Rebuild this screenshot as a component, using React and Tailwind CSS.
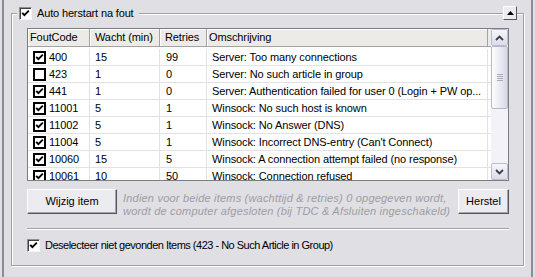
import React from "react";

const rows = [
  [true, "400", "15", "99", "Server: Too many connections"],
  [false, "423", "1", "0", "Server: No such article in group"],
  [true, "441", "1", "0", "Server: Authentication failed for user 0 (Login + PW op..."],
  [true, "11001", "5", "1", "Winsock: No such host is known"],
  [true, "11002", "5", "1", "Winsock: No Answer (DNS)"],
  [true, "11004", "5", "1", "Winsock: Incorrect DNS-entry (Can't Connect)"],
  [true, "10060", "15", "5", "Winsock: A connection attempt failed (no response)"],
  [true, "10061", "10", "50", "Winsock: Connection refused"],
];

const RowCheck = ({ checked }) => (
  <svg width="13" height="13" viewBox="0 0 13 13" className="shrink-0">
    <rect x="1" y="1" width="11" height="11" fill="#fff" stroke="#000" strokeWidth="2" />
    {checked && (
      <path d="M3.2 5.8 L5.4 8.2 L9.8 3.6" stroke="#000" strokeWidth="1.9" fill="none" />
    )}
  </svg>
);

const SunkenCheck = () => (
  <div className="w-[13px] h-[13px] shrink-0 border border-t-[#8e8e93] border-l-[#8e8e93] border-r-[#f4f4f6] border-b-[#f4f4f6] bg-white shadow-[inset_1px_1px_0_#404040] flex items-center justify-center">
    <svg width="9" height="9" viewBox="0 0 9 9">
      <path d="M1.2 3.8 L3.4 6.2 L7.8 1.6" stroke="#000" strokeWidth="1.9" fill="none" />
    </svg>
  </div>
);

const ScrollArrow = ({ up }) => (
  <div className="h-[17px] w-[17px] shrink-0 rounded-[2px] border border-[#bcbccf] bg-gradient-to-b from-[#f6f6fa] to-[#dcdce8] flex items-center justify-center">
    <svg width="9" height="6" viewBox="0 0 9 6">
      <path
        d={up ? "M1 5 L4.5 1.5 L8 5" : "M1 1 L4.5 4.5 L8 1"}
        stroke="#3c3c48"
        strokeWidth="1.8"
        fill="none"
      />
    </svg>
  </div>
);

const Button = ({ className, children }) => (
  <button className={`h-[25px] shrink-0 bg-[#ecebef] border border-t-white border-l-white border-r-[#55555c] border-b-[#55555c] shadow-[inset_-1px_-1px_0_#a5a5ab] text-black text-[11px] ${className}`}>
    {children}
  </button>
);

const App = () => {
  return (
    <div className="w-[535px] h-[277px] overflow-hidden bg-[#e0dfe3] text-[11px] text-black font-['Liberation_Sans',Arial,sans-serif]">
      <div className="ml-[2px] w-[531px] h-full border-l-2 border-r-2 border-[#8b8b99] pt-[13px] pl-[7px]">
        {/* Group box */}
        <div className="relative w-[513px] h-[253px] border border-[#9f9fa5] shadow-[inset_1px_1px_0_#fff,1px_1px_0_#fff] pt-[14px] pl-[15px]">
          <div className="absolute left-[5px] top-[-8px] flex items-center gap-[5px] bg-[#e0dfe3] pl-[2px] pr-[5px] h-[15px]">
            <SunkenCheck />
            <span className="leading-[13px] tracking-[-0.15px]">Auto herstart na fout</span>
          </div>
          <button className="absolute left-[491px] top-[-8px] w-[14px] h-[14px] bg-[#ecebef] border border-t-white border-l-white border-r-[#55555c] border-b-[#55555c] flex items-center justify-center">
            <svg width="7" height="4" viewBox="0 0 7 4">
              <path d="M0 4 L3.5 0 L7 4 Z" fill="#000" />
            </svg>
          </button>

          {/* List view */}
          <div className="w-[482px] h-[153px] border border-[#7c7c84] bg-white flex">
            <div className="w-[463px] overflow-hidden flex flex-col tracking-[-0.1px]">
              <div className="h-[18px] shrink-0 flex bg-[#ecebe8] border-b border-[#a3a2a6]">
                <div className="w-[62px] pl-[2px] flex items-center border-r border-[#a3a2a6] shadow-[inset_1px_1px_0_#fff]">FoutCode</div>
                <div className="w-[70px] pl-[5px] flex items-center border-r border-[#a3a2a6] shadow-[inset_1px_1px_0_#fff]">Wacht (min)</div>
                <div className="w-[47px] pl-[5px] flex items-center border-r border-[#a3a2a6] shadow-[inset_1px_1px_0_#fff]">Retries</div>
                <div className="w-[281px] pl-[2px] flex items-center border-r border-[#a3a2a6] shadow-[inset_1px_1px_0_#fff]">Omschrijving</div>
                <div className="flex-1" />
              </div>
              <div className="pt-[2px]">
                {rows.map(([checked, code, wacht, retries, desc]) => (
                  <div key={code} className="h-[17px] flex border-b border-[#e2e2e4]">
                    <div className="w-[62px] pl-[5px] flex items-center gap-[3px] border-r border-[#e2e2e4]">
                      <RowCheck checked={checked} />
                      <span>{code}</span>
                    </div>
                    <div className="w-[70px] pl-[5px] flex items-center border-r border-[#e2e2e4]">{wacht}</div>
                    <div className="w-[47px] pl-[6px] flex items-center border-r border-[#e2e2e4]">{retries}</div>
                    <div className="w-[281px] pl-[5px] flex items-center whitespace-nowrap overflow-hidden border-r border-[#e2e2e4]">{desc}</div>
                  </div>
                ))}
              </div>
            </div>
            {/* Scrollbar */}
            <div className="w-[17px] flex flex-col bg-[#f3f3f7]">
              <ScrollArrow up />
              <div className="h-[63px] shrink-0 rounded-[2px] border border-[#b6b6cc] bg-gradient-to-r from-[#fdfdff] to-[#d9d9e6] flex flex-col items-center justify-center gap-[1px]">
                <div className="w-[6px] h-px bg-[#a9a9bd]" />
                <div className="w-[6px] h-px bg-[#a9a9bd]" />
                <div className="w-[6px] h-px bg-[#a9a9bd]" />
                <div className="w-[6px] h-px bg-[#a9a9bd]" />
              </div>
              <div className="flex-1" />
              <ScrollArrow />
            </div>
          </div>

          {/* Buttons and note */}
          <div className="mt-[8px] w-[482px] h-[25px] flex items-start">
            <Button className="w-[90px]">Wijzig item</Button>
            <div className="flex-1 ml-[6px] pt-[3px] italic text-[#9d9da3] leading-[13px] whitespace-nowrap tracking-[0.2px]">
              <div>Indien voor beide items (wachttijd &amp; retries) 0 opgegeven wordt,</div>
              <div>wordt de computer afgesloten (bij TDC &amp; Afsluiten ingeschakeld)</div>
            </div>
            <Button className="w-[51px]">Herstel</Button>
          </div>

          <div className="mt-[14px] w-[482px] border-t border-[#a0a0a6] border-b border-b-white" />

          <div className="mt-[7px] flex items-center gap-[5px]">
            <SunkenCheck />
            <span className="tracking-[-0.5px]">Deselecteer niet gevonden Items (423 - No Such Article in Group)</span>
          </div>
        </div>
      </div>
    </div>
  );
};

export default App;
